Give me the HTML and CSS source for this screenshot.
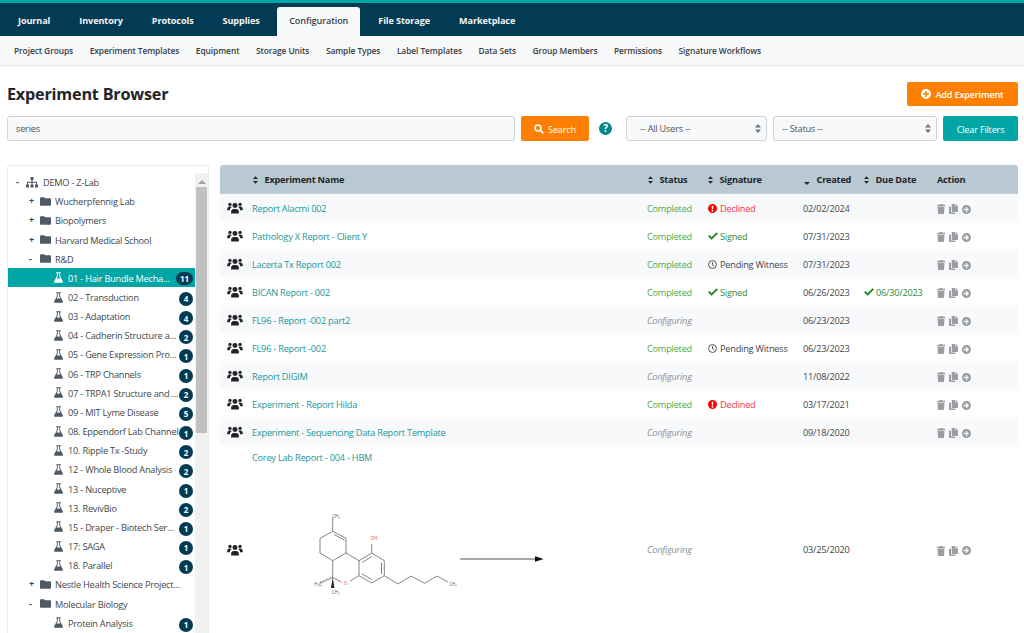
FILE: index.html
```html
<!DOCTYPE html>
<html lang="en">
<head>
<meta charset="utf-8">
<title>Experiment Browser</title>
<link rel="stylesheet" href="styles.css">
</head>
<body>
<svg class="defs" width="0" height="0" aria-hidden="true">
  <symbol id="i-flask" viewBox="0 0 12 14"><path d="M3 0h6v1.200H8.200v4L11.800 12c.4.9-.1 2-1.200 2H1.400C.3 14-.2 12.900.2 12L3.800 5.200v-4H3z M5 1.200v4.400L3.600 8.400h4.800L7 5.600V1.200z" fill-rule="evenodd"/></symbol>
  <symbol id="i-folder" viewBox="0 0 14 11"><path d="M1.300 0h3.900l1.500 1.500h6c.7 0 1.300.6 1.300 1.300v6.900c0 .7-.6 1.300-1.300 1.300H1.300C.6 11 0 10.400 0 9.700V1.300C0 .6.600 0 1.300 0z"/></symbol>
  <symbol id="i-users" viewBox="0 0 17 13"><circle cx="8.500" cy="3.900" r="2.700"/><circle cx="3" cy="2.600" r="1.800"/><circle cx="14" cy="2.600" r="1.800"/><path d="M4.300 12.400v-1.900c0-2 1.500-3 2.700-3h3c1.200 0 2.700 1 2.700 3v1.900z"/><path d="M0 8.500C0 6.300 1.300 5 2.600 5h1.200c.5 0 1 .2 1.300.5C3.900 6.200 3 7.400 3 8.900H0z"/><path d="M17 8.500C17 6.300 15.700 5 14.400 5h-1.200c-.5 0-1 .2-1.300.5 1.200.7 2.100 1.900 2.100 3.400H17z"/></symbol>
  <symbol id="i-trash" viewBox="0 0 9 11"><path d="M3 0h3l.5.7H9V2H0V.7h2.500z"/><path d="M.6 2.800h7.800l-.5 7.400c0 .5-.4.8-.9.8H2c-.5 0-.9-.3-.9-.8z"/></symbol>
  <symbol id="i-copy" viewBox="0 0 10 11"><path d="M3 0h4v2.500h3v5.600c0 .4-.3.7-.7.7H3.700c-.4 0-.7-.3-.7-.7z"/><path d="M8 0l2 2H8z"/><path d="M0 3h2.200v6.500H7V11H.7C.3 11 0 10.700 0 10.300z"/></symbol>
  <symbol id="i-go" viewBox="0 0 10 10"><path fill-rule="evenodd" d="M5 0a5 5 0 1 1 0 10A5 5 0 0 1 5 0zM4.800 2L4 2.800 5.400 4.200H2v1.600h3.400L4 7.200l.8.8L7.800 5z"/></symbol>
  <symbol id="i-sort" viewBox="0 0 6 9"><path d="M3 0l3 3.400H0zM3 9L0 5.600h6z"/></symbol>
  <symbol id="i-check" viewBox="0 0 11 9"><path d="M1.400 3.300L4 5.900 9.600.4 11 1.800 4 8.800 0 4.800z"/></symbol>
  <symbol id="i-alert" viewBox="0 0 10 10"><path fill-rule="evenodd" d="M5 0a5 5 0 1 1 0 10A5 5 0 0 1 5 0zM4.100 2l.2 3.800h1.400L5.900 2zM5 6.500a1 1 0 1 0 0 2 1 1 0 0 0 0-2z"/></symbol>
  <symbol id="i-clock" viewBox="0 0 10 10"><circle cx="5" cy="5" r="4.400" fill="none" stroke="currentColor" stroke-width="1"/><path d="M5 2.300v2.900l1.900 1.200" fill="none" stroke="currentColor" stroke-width="1"/></symbol>
</svg>

<header class="topnav">
  <a class="tab">Journal</a>
  <a class="tab">Inventory</a>
  <a class="tab">Protocols</a>
  <a class="tab">Supplies</a>
  <a class="tab active">Configuration</a>
  <a class="tab">File Storage</a>
  <a class="tab">Marketplace</a>
</header>
<nav class="subnav">
  <a>Project Groups</a><a>Experiment Templates</a><a>Equipment</a><a>Storage Units</a><a>Sample Types</a><a>Label Templates</a><a>Data Sets</a><a>Group Members</a><a>Permissions</a><a>Signature Workflows</a>
</nav>

<main class="page">
  <div class="title-row">
    <h1>Experiment Browser</h1>
    <button class="btn orange add">
      <svg class="btn-ico" viewBox="0 0 10 10"><path fill="#fff" fill-rule="evenodd" d="M5 0a5 5 0 1 1 0 10A5 5 0 0 1 5 0zM4.200 2v2.200H2v1.600h2.200V8h1.600V5.800H8V4.200H5.800V2z"/></svg>
      Add Experiment
    </button>
  </div>
  <div class="filter-row">
    <div class="field search-field">series</div>
    <button class="btn orange search">
      <svg class="btn-ico" viewBox="0 0 10 10"><circle cx="4" cy="4" r="3" fill="none" stroke="#fff" stroke-width="1.700"/><path d="M6.200 6.200L9.300 9.300" stroke="#fff" stroke-width="1.900"/></svg>
      Search
    </button>
    <span class="help">?</span>
    <div class="field select sel-users"><span>-- All Users --</span><svg class="caret"><use href="#i-sort"/></svg></div>
    <div class="field select sel-status"><span>-- Status --</span><svg class="caret"><use href="#i-sort"/></svg></div>
    <button class="btn teal clear">Clear Filters</button>
  </div>

  <div class="columns">
    <aside class="tree-card">
      <div class="tree">
        <div class="node l0"><span class="tog">-</span><svg class="org" viewBox="0 0 12 11"><path d="M4.500 0h3v3h-1v1.700H11V7.500h1v3H9v-3h1V5.700H6.500v1.800h1v3h-3v-3h1V5.700H2v1.800h1v3H0v-3h1V4.700h4.500V3h-1z"/></svg><span class="lbl">DEMO - Z-Lab</span></div>
        <div class="node l1"><span class="tog">+</span><svg class="folder"><use href="#i-folder"/></svg><span class="lbl">Wucherpfennig Lab</span></div>
        <div class="node l1"><span class="tog">+</span><svg class="folder"><use href="#i-folder"/></svg><span class="lbl">Biopolymers</span></div>
        <div class="node l1"><span class="tog">+</span><svg class="folder"><use href="#i-folder"/></svg><span class="lbl">Harvard Medical School</span></div>
        <div class="node l1"><span class="tog">-</span><svg class="folder"><use href="#i-folder"/></svg><span class="lbl">R&amp;D</span></div>
        <div class="node l2 selected"><svg class="flask"><use href="#i-flask"/></svg><span class="lbl">01 - Hair Bundle Mecha...</span><b class="badge wide">11</b></div>
        <div class="node l2"><svg class="flask"><use href="#i-flask"/></svg><span class="lbl">02 - Transduction</span><b class="badge">4</b></div>
        <div class="node l2"><svg class="flask"><use href="#i-flask"/></svg><span class="lbl">03 - Adaptation</span><b class="badge">4</b></div>
        <div class="node l2"><svg class="flask"><use href="#i-flask"/></svg><span class="lbl">04 - Cadherin Structure a...</span><b class="badge">2</b></div>
        <div class="node l2"><svg class="flask"><use href="#i-flask"/></svg><span class="lbl">05 - Gene Expression Pro...</span><b class="badge">1</b></div>
        <div class="node l2"><svg class="flask"><use href="#i-flask"/></svg><span class="lbl">06 - TRP Channels</span><b class="badge">1</b></div>
        <div class="node l2"><svg class="flask"><use href="#i-flask"/></svg><span class="lbl">07 - TRPA1 Structure and ...</span><b class="badge">2</b></div>
        <div class="node l2"><svg class="flask"><use href="#i-flask"/></svg><span class="lbl">09 - MIT Lyme Disease</span><b class="badge">5</b></div>
        <div class="node l2"><svg class="flask"><use href="#i-flask"/></svg><span class="lbl">08. Eppendorf Lab Channel</span><b class="badge">1</b></div>
        <div class="node l2"><svg class="flask"><use href="#i-flask"/></svg><span class="lbl">10. Ripple Tx -Study</span><b class="badge">2</b></div>
        <div class="node l2"><svg class="flask"><use href="#i-flask"/></svg><span class="lbl">12 - Whole Blood Analysis</span><b class="badge">2</b></div>
        <div class="node l2"><svg class="flask"><use href="#i-flask"/></svg><span class="lbl">13 - Nuceptive</span><b class="badge">1</b></div>
        <div class="node l2"><svg class="flask"><use href="#i-flask"/></svg><span class="lbl">13. RevivBio</span><b class="badge">2</b></div>
        <div class="node l2"><svg class="flask"><use href="#i-flask"/></svg><span class="lbl">15 - Draper - Biotech Ser...</span><b class="badge">1</b></div>
        <div class="node l2"><svg class="flask"><use href="#i-flask"/></svg><span class="lbl">17: SAGA</span><b class="badge">1</b></div>
        <div class="node l2"><svg class="flask"><use href="#i-flask"/></svg><span class="lbl">18. Parallel</span><b class="badge">1</b></div>
        <div class="node l1"><span class="tog">+</span><svg class="folder"><use href="#i-folder"/></svg><span class="lbl">Nestle Health Science Project...</span></div>
        <div class="node l1"><span class="tog">-</span><svg class="folder"><use href="#i-folder"/></svg><span class="lbl">Molecular Biology</span></div>
        <div class="node l2"><svg class="flask"><use href="#i-flask"/></svg><span class="lbl">Protein Analysis</span><b class="badge">1</b></div>
      </div>
      <div class="scrollbar"><span class="arrow"></span><span class="thumb"></span></div>
    </aside>

    <section class="table-card">
      <table class="grid">
        <colgroup><col class="c-ico"><col class="c-name"><col class="c-status"><col class="c-sig"><col class="c-created"><col class="c-due"><col class="c-act"></colgroup>
        <thead>
          <tr>
            <th></th>
            <th><svg class="sort"><use href="#i-sort"/></svg>Experiment Name</th>
            <th><svg class="sort"><use href="#i-sort"/></svg>Status</th>
            <th><svg class="sort"><use href="#i-sort"/></svg>Signature</th>
            <th><svg class="sort down" viewBox="0 0 6 3"><path d="M0 0h6L3 3z"/></svg>Created</th>
            <th><svg class="sort"><use href="#i-sort"/></svg>Due Date</th>
            <th class="act-h">Action</th>
          </tr>
        </thead>
        <tbody>
          <tr><td><svg class="team"><use href="#i-users"/></svg></td><td><a class="link">Report Alacmi 002</a></td><td class="ok">Completed</td><td class="bad"><svg class="ic"><use href="#i-alert"/></svg>Declined</td><td>02/02/2024</td><td></td><td class="actions"><svg class="a-t"><use href="#i-trash"/></svg><svg class="a-c"><use href="#i-copy"/></svg><svg class="a-g"><use href="#i-go"/></svg></td></tr>
          <tr><td><svg class="team"><use href="#i-users"/></svg></td><td><a class="link">Pathology X Report - Client Y</a></td><td class="ok">Completed</td><td class="signed"><svg class="ic chk"><use href="#i-check"/></svg>Signed</td><td>07/31/2023</td><td></td><td class="actions"><svg class="a-t"><use href="#i-trash"/></svg><svg class="a-c"><use href="#i-copy"/></svg><svg class="a-g"><use href="#i-go"/></svg></td></tr>
          <tr><td><svg class="team"><use href="#i-users"/></svg></td><td><a class="link">Lacerta Tx Report 002</a></td><td class="ok">Completed</td><td><svg class="ic"><use href="#i-clock"/></svg>Pending Witness</td><td>07/31/2023</td><td></td><td class="actions"><svg class="a-t"><use href="#i-trash"/></svg><svg class="a-c"><use href="#i-copy"/></svg><svg class="a-g"><use href="#i-go"/></svg></td></tr>
          <tr><td><svg class="team"><use href="#i-users"/></svg></td><td><a class="link">BICAN Report - 002</a></td><td class="ok">Completed</td><td class="signed"><svg class="ic chk"><use href="#i-check"/></svg>Signed</td><td>06/26/2023</td><td class="signed"><svg class="ic chk"><use href="#i-check"/></svg>06/30/2023</td><td class="actions"><svg class="a-t"><use href="#i-trash"/></svg><svg class="a-c"><use href="#i-copy"/></svg><svg class="a-g"><use href="#i-go"/></svg></td></tr>
          <tr><td><svg class="team"><use href="#i-users"/></svg></td><td><a class="link">FL96 - Report -002 part2</a></td><td class="cfg">Configuring</td><td></td><td>06/23/2023</td><td></td><td class="actions"><svg class="a-t"><use href="#i-trash"/></svg><svg class="a-c"><use href="#i-copy"/></svg><svg class="a-g"><use href="#i-go"/></svg></td></tr>
          <tr><td><svg class="team"><use href="#i-users"/></svg></td><td><a class="link">FL96 - Report -002</a></td><td class="ok">Completed</td><td><svg class="ic"><use href="#i-clock"/></svg>Pending Witness</td><td>06/23/2023</td><td></td><td class="actions"><svg class="a-t"><use href="#i-trash"/></svg><svg class="a-c"><use href="#i-copy"/></svg><svg class="a-g"><use href="#i-go"/></svg></td></tr>
          <tr><td><svg class="team"><use href="#i-users"/></svg></td><td><a class="link">Report DIGIM</a></td><td class="cfg">Configuring</td><td></td><td>11/08/2022</td><td></td><td class="actions"><svg class="a-t"><use href="#i-trash"/></svg><svg class="a-c"><use href="#i-copy"/></svg><svg class="a-g"><use href="#i-go"/></svg></td></tr>
          <tr><td><svg class="team"><use href="#i-users"/></svg></td><td><a class="link">Experiment - Report Hilda</a></td><td class="ok">Completed</td><td class="bad"><svg class="ic"><use href="#i-alert"/></svg>Declined</td><td>03/17/2021</td><td></td><td class="actions"><svg class="a-t"><use href="#i-trash"/></svg><svg class="a-c"><use href="#i-copy"/></svg><svg class="a-g"><use href="#i-go"/></svg></td></tr>
          <tr><td><svg class="team"><use href="#i-users"/></svg></td><td><a class="link">Experiment - Sequencing Data Report Template</a></td><td class="cfg">Configuring</td><td></td><td>09/18/2020</td><td></td><td class="actions"><svg class="a-t"><use href="#i-trash"/></svg><svg class="a-c"><use href="#i-copy"/></svg><svg class="a-g"><use href="#i-go"/></svg></td></tr>
          <tr class="tall"><td><svg class="team"><use href="#i-users"/></svg></td>
            <td class="mol-cell"><a class="link">Corey Lab Report - 004 - HBM</a>
              <svg class="molecule" viewBox="0 0 280 110">
                <g fill="none" stroke="#666" stroke-width="0.800">
                  <path d="M52.700 19V32.300L40 39.300V54L52.700 61.700L66 54V39.300L52.700 32.300"/><path d="M54 35.500L64.500 41"/>
                  <path d="M66 54L79 61.700V76.700M52.700 61.700V78.300L61.700 83.300M70 82L79 76.700"/>
                  <path d="M79 61.700L91.700 54L104.300 61.700V76.700L91.700 84L79 76.700"/>
                  <path d="M82 63.500L91.700 57.500M101.500 63.500V75M91.700 80.500L82 75"/><path d="M91.700 54V45"/>
                  <path d="M104.300 76.700L118 85L131 77L144.700 84.300L157 77L168 83"/>
                </g>
                <path d="M52.700 78.300L51 89H54.400z" fill="#222"/>
                <path d="M52.700 78.300L40 84" stroke="#555" stroke-width="2" stroke-dasharray="0.700 0.900" fill="none"/>
                <text x="56" y="19" class="atom">CH₃</text><text x="94" y="41" class="atom oh">OH</text><text x="65.700" y="86" class="atom oh">O</text><text x="173" y="87" class="atom">CH₃</text><text x="38" y="87" class="atom">H₃C</text><text x="55.700" y="95" class="atom">CH₃</text>
                <path d="M180 60H256" stroke="#555" stroke-width="1"/><path d="M255 57.300L263.700 60L255 62.700z" fill="#111"/>
              </svg>
            </td>
            <td class="cfg">Configuring</td><td></td><td>03/25/2020</td><td></td><td class="actions"><svg class="a-t"><use href="#i-trash"/></svg><svg class="a-c"><use href="#i-copy"/></svg><svg class="a-g"><use href="#i-go"/></svg></td></tr>
        </tbody>
      </table>
    </section>
  </div>
</main>
</body>
</html>
```

FILE: styles.css
```css
* { box-sizing: border-box; }
html, body { margin: 0; height: 633px; overflow: hidden; }
body { font-family: "Open Sans", "Noto Sans", sans-serif; font-size: 9.200px; letter-spacing: -0.220px; color: #333a40; background: #fff; }
.defs { position: absolute; }

.topnav { display: flex; align-items: flex-end; height: 36px; background: #033a54; border-top: 3px solid #00a6a6; padding-left: 3.500px; }
.tab { display: flex; align-items: center; height: 29px; padding: 0 14.500px 2px; color: #f4f6f7; font-weight: 700; font-size: 9.100px; letter-spacing: -0.100px; }
.tab.active { background: #f8f9fa; color: #3a4248; font-weight: 600; border-radius: 3px 3px 0 0; margin: 0 3.500px 0 3px; padding: 0 12px 2px; }

.subnav { display: flex; align-items: center; height: 30px; gap: 16.500px; padding-left: 14px; background: #f8f9fa; border-bottom: 1px solid #e4e7ea; font-weight: 600; font-size: 8.400px; letter-spacing: -0.070px; color: #373e44; }

.page { padding: 0 6px 0 7px; }
.title-row { display: flex; justify-content: space-between; align-items: center; height: 51px; padding-top: 4px; }
h1 { margin: 0; font-size: 16.200px; letter-spacing: -0.200px; font-weight: 700; color: #212529; }
.btn { flex: none; display: flex; align-items: center; justify-content: center; border: 0; border-radius: 2px; color: #fff; font-family: inherit; font-size: 9.200px; letter-spacing: inherit; padding: 1px 0 0; }
.orange { background: #ff8000; }
.teal { background: #00a6a6; }
.add { width: 111px; height: 24px; font-weight: 600; gap: 4px; }
.btn-ico { width: 10px; height: 10px; }

.filter-row { display: flex; align-items: center; height: 25px; margin-top: -1px; }
.field { flex: none; height: 25px; background: #f8f9fa; border: 1px solid #ced4da; border-radius: 3px; display: flex; align-items: center; color: #4c5358; }
.search-field { width: 508px; padding-left: 8px; }
.search { width: 68px; height: 25px; margin-left: 6px; gap: 4px; }
.help { flex: none; display: flex; align-items: center; justify-content: center; width: 13px; height: 13px; margin: 0 14px 0 10px; border-radius: 50%; background: #00868b; color: #fff; font-size: 10px; font-weight: 700; line-height: 13px; }
.select { justify-content: space-between; padding-right: 5px; }
.sel-users { width: 141px; padding-left: 13px; }
.sel-status { width: 164px; padding-left: 8px; margin-left: 6px; }
.caret { width: 6px; height: 9px; fill: #6a7177; }
.clear { width: 75px; height: 25px; margin-left: 6px; }

.columns { display: flex; align-items: flex-start; gap: 11px; margin-top: 24px; }
.tree-card { display: flex; width: 202px; height: 480px; flex: none; background: #fff; border: 1px solid #e6e8ea; border-radius: 3px; border-bottom: 0; padding-top: 7px; color: #40474d; }
.tree { flex: 1; min-width: 0; margin-top: -1px; }
.node { position: relative; display: flex; align-items: center; height: 19.170px; white-space: nowrap; }
.lbl { padding-top: 2px; }
.l0 { padding-left: 8px; }
.l1 { padding-left: 21px; }
.l2 { padding-left: 46px; }
.tog { width: 11px; flex: none; font-weight: 700; font-size: 9px; color: #444; }
.l0 .tog { width: 10px; }
.org { width: 12px; height: 11px; fill: #4b5a68; margin: 1px 5px 0 0; flex: none; }
.folder { width: 11px; height: 9px; fill: #4e5a66; flex: none; margin: 1px 4px 0 0; }
.flask { width: 9px; height: 11px; fill: #4e5a66; flex: none; margin: 1px 5px 0 0; }
.selected { background: #00a6a6; color: #fff; }
.selected .flask { fill: #fff; }
.badge { position: absolute; right: 2px; top: 5px; min-width: 14px; height: 14px; border-radius: 7px; background: #033a54; color: #fff; font-size: 8px; letter-spacing: 0; font-weight: 700; display: flex; align-items: center; justify-content: center; }
.wide { width: 17px; height: 13px; top: 4px; }
.scrollbar { position: relative; width: 13px; flex: none; height: 100%; background: #f1f1f1; }
.arrow { position: absolute; left: 3px; top: 7px; border: 4px solid transparent; border-top: 0; border-bottom: 4px solid #a3a3a3; }
.thumb { position: absolute; left: 1px; right: 1px; top: 14px; height: 246px; background: #c1c1c1; }

.table-card { flex: 1; min-width: 0; height: 500px; border-radius: 4px 4px 0 0; overflow: hidden; box-shadow: 0 0 1px #d0d6da; }
.grid { width: 100%; border-collapse: collapse; table-layout: fixed; }
.c-ico { width: 32px; } .c-name { width: 395px; } .c-status { width: 60px; } .c-sig { width: 96px; } .c-created { width: 60px; } .c-due { width: 74px; } .c-act { width: 81px; }
th { height: 28px; background: #b9c9d2; color: #212529; font-weight: 700; text-align: left; padding: 1px 0 0; white-space: nowrap; border-bottom: 1px solid #c4d0d7; }
.sort { width: 5px; height: 8px; margin: 0 6.500px 0 1px; fill: #212529; vertical-align: -1px; }
.sort.down { height: 3px; vertical-align: -2px; width: 6px; }
td { height: 28px; padding: 2px 0 0; color: #40474d; white-space: nowrap; }
tbody tr:nth-child(odd) td { background: #f8f9fa; }
tbody tr.tall td { background: #fff; }
td .team { width: 16px; height: 12px; fill: #212529; margin-left: 7px; display: block; }
.link { color: #17989b; }
.ok { color: #3fae49; }
.cfg { color: #8b9196; font-style: italic; }
.bad { color: #f5334f; }
.signed { color: #2e8b3a; }
.ic { width: 9px; height: 9px; margin: 0 3px 0 1px; vertical-align: -1px; fill: #f00; color: #444; }
.ic.chk { width: 10px; height: 8px; fill: #13801f; margin-right: 2px; vertical-align: -0.500px; }
.actions svg { fill: #9a9ea2; margin-right: 4px; vertical-align: middle; }
.actions .a-t { width: 8px; height: 10px; }
.actions .a-c { width: 9px; height: 10px; }
.actions .a-g { width: 9px; height: 9px; margin-right: 0; }
.mol-cell { vertical-align: top; padding-top: 6px; }
.mol-cell .link { display: block; }
.molecule { display: block; width: 280px; height: 110px; margin: 35px 0 43px 28px; }
.atom { font-size: 4.500px; letter-spacing: 0; fill: #555; text-anchor: middle; }
.oh { fill: #d9534f; }
```
